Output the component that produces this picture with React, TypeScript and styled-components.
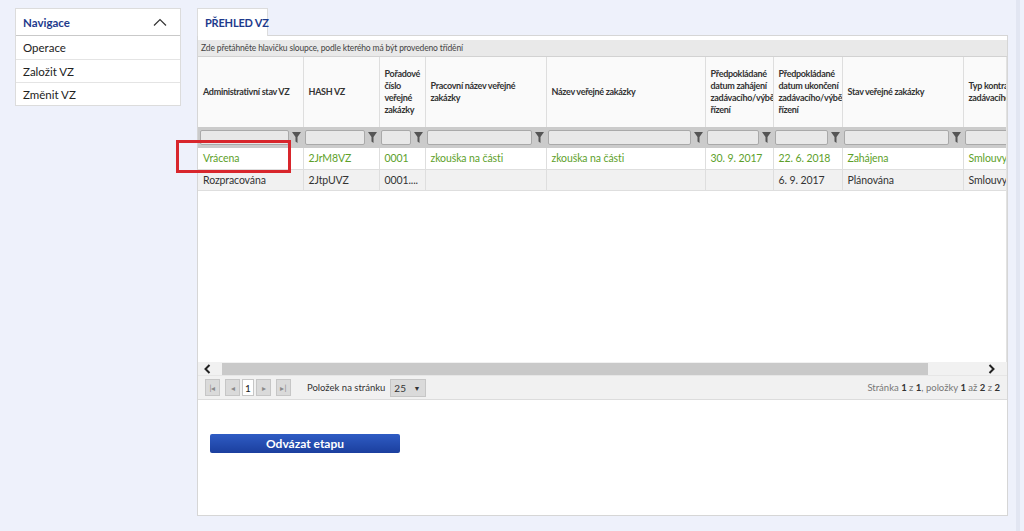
import React from "react";
import styled, { createGlobalStyle } from "styled-components";

const GlobalStyle = createGlobalStyle`
  html, body {
    margin: 0;
    padding: 0;
    background: #eef1fb;
    font-family: "Lato", "Liberation Sans", sans-serif;
    color: #333;
  }
  * { box-sizing: border-box; }
`;

const Page = styled.div`
  display: flex;
  align-items: flex-start;
  width: 1024px;
  height: 531px;
  padding: 8px 0 0 15px;
  overflow: hidden;
  position: relative;
`;

const EdgeStrip = styled.div`
  flex-shrink: 0;
  margin-left: 8px;
  width: 4px;
  height: 531px;
  margin-top: -8px;
  background: #e2e6f2;
`;

const Nav = styled.nav`
  flex-shrink: 0;
  width: 166px;
  margin-right: 16px;
  background: #fff;
  border: 1px solid #dcdcdc;
`;

const NavHead = styled.div`
  height: 27px;
  display: flex;
  align-items: center;
  justify-content: space-between;
  padding: 0 13px 0 7px;
  color: #1e3a8c;
  font-weight: bold;
  font-size: 11.5px;
  border-bottom: 1px solid #c9c9c9;
`;

const NavItem = styled.div`
  height: 23px;
  display: flex;
  align-items: center;
  padding-left: 7px;
  font-size: 11.5px;
  color: #222;
  & + & { border-top: 1px solid #e4e4e4; }
`;

const Main = styled.main`
  flex-shrink: 0;
  width: 811px;
  display: flex;
  flex-direction: column;
`;

const Tab = styled.div`
  align-self: flex-start;
  width: 71px;
  height: 28px;
  padding: 0 7px;
  display: flex;
  align-items: center;
  background: #fff;
  border: 1px solid #dcdcdc;
  border-bottom: none;
  color: #1e3a8c;
  font-weight: bold;
  font-size: 11px;
  letter-spacing: -0.2px;
  white-space: nowrap;
  position: relative;
  z-index: 1;
  margin-bottom: -1px;
`;

const Panel = styled.section`
  height: 481px;
  background: #fff;
  border: 1px solid #d6d6d6;
  padding-top: 4px;
  display: flex;
  flex-direction: column;
`;

const Grid = styled.div`
  border-bottom: 1px solid #dcdcdc;
  background: #fff;
`;

const GroupBar = styled.div`
  height: 17px;
  background: #e9e9e9;
  border-bottom: 1px solid #d2d2d2;
  font-size: 8.5px;
  letter-spacing: -0.15px;
  color: #444;
  padding-left: 3px;
  display: flex;
  align-items: center;
`;

const TableClip = styled.div`
  overflow: hidden;
  height: 305px;
  border-right: 1px solid #e2e2e2;
`;

const Table = styled.table`
  table-layout: fixed;
  border-collapse: collapse;
  width: 865px;
`;

const Th = styled.th`
  height: 70px;
  padding: 0 2px 0 5px;
  text-align: left;
  vertical-align: middle;
  font-size: 9px;
  line-height: 12px;
  letter-spacing: -0.3px;
  font-weight: bold;
  color: #333;
  background: #fafafa;
  overflow: hidden;
  border-left: 1px solid #dedede;
  &:first-child { border-left: none; }
`;

const FilterTd = styled.td`
  height: 21px;
  background: #cbcbcb;
  padding: 0 2px;
`;

const FilterBox = styled.div`
  display: flex;
  align-items: center;
  gap: 3px;
`;

const FilterInput = styled.div`
  flex: 1;
  height: 15px;
  background: #e8e8e8;
  border: 1px solid #a9a9a9;
  border-radius: 2px;
`;

const Td = styled.td<{ $alt?: boolean; $green?: boolean }>`
  height: 21px;
  padding: 0 5px;
  font-size: 10.5px;
  letter-spacing: -0.1px;
  white-space: nowrap;
  overflow: hidden;
  color: ${(p) => (p.$green ? "#5d9f2a" : "#333")};
  background: ${(p) => (p.$alt ? "#f1f1f1" : "#fff")};
  border-left: 1px solid #dedede;
  border-bottom: 1px solid #dedede;
  &:first-child { border-left: none; }
`;

const ScrollBar = styled.div`
  height: 13px;
  background: #f1f1f1;
  display: flex;
  align-items: center;
  justify-content: space-between;
  padding: 0 12px 0 6px;
`;

const Thumb = styled.div`
  width: 706px;
  height: 12px;
  margin-left: 11px;
  margin-right: auto;
  background: #c9c9c9;
`;

const Pager = styled.div`
  height: 24px;
  background: #f1f1f1;
  border-top: 1px solid #e6e6e6;
  display: flex;
  align-items: center;
  padding: 0 7px;
  font-size: 9.5px;
  color: #333;
`;

const PageBtn = styled.span<{ $gap?: number }>`
  width: 15px;
  height: 17px;
  background: #dadada;
  border: 1px solid #c6c6c6;
  display: inline-flex;
  align-items: center;
  justify-content: center;
  margin-right: ${(p) => p.$gap ?? 2}px;
  color: #8a8a8a;
  font-size: 8px;
`;

const PageNum = styled.span`
  width: 12px;
  height: 17px;
  background: #fff;
  border: 1px solid #c6c6c6;
  display: inline-flex;
  align-items: center;
  justify-content: center;
  margin-right: 2px;
  font-size: 10px;
  color: #222;
`;

const PerPage = styled.span`
  margin-left: 14px;
  margin-right: 5px;
`;

const Select = styled.span`
  width: 36px;
  height: 18px;
  background: #dadada;
  border: 1px solid #c6c6c6;
  display: inline-flex;
  align-items: center;
  justify-content: space-between;
  padding: 0 5px 0 3px;
  font-size: 10px;
`;

const Caret = styled.span`
  font-size: 7px;
`;

const PageInfo = styled.span`
  margin-left: auto;
  color: #777;
  font-size: 9.5px;
  b { color: #333; }
`;

const Actions = styled.div`
  padding: 32px 0 0 12px;
`;

const Button = styled.button`
  width: 190px;
  height: 19px;
  border: none;
  border-radius: 2px;
  background: linear-gradient(#2f5cc4, #1b3f9e);
  color: #fff;
  font-family: inherit;
  font-weight: bold;
  font-size: 12px;
  padding: 0;
`;

const Highlight = styled.div`
  position: absolute;
  left: 176px;
  top: 140px;
  width: 115px;
  height: 33px;
  border: 3px solid #d8262c;
  pointer-events: none;
`;

const Funnel = () => (
  <svg width="9" height="11" viewBox="0 0 9 11">
    <path d="M0 0h9L5.5 5v6L3.5 9.5V5z" fill="#555" />
  </svg>
);

const ChevronUp = () => (
  <svg width="14" height="8" viewBox="0 0 14 8">
    <path d="M1 7.5L7 1.5l6 6" stroke="#333" strokeWidth="1.2" fill="none" />
  </svg>
);

const Chevron = ({ dir }: { dir: "left" | "right" }) => (
  <svg width="7" height="10" viewBox="0 0 7 10">
    <path
      d={dir === "left" ? "M5.5 1L1.5 5l4 4" : "M1.5 1l4 4-4 4"}
      stroke="#222"
      strokeWidth="2"
      fill="none"
    />
  </svg>
);

const widths = [105, 76, 46, 121, 159, 68, 69, 121, 100];
const heads = [
  "Administrativní stav VZ",
  "HASH VZ",
  "Pořadové číslo veřejné zakázky",
  "Pracovní název veřejné zakázky",
  "Název veřejné zakázky",
  "Předpokládané datum zahájení zadávacího/výběrového řízení",
  "Předpokládané datum ukončení zadávacího/výběrového řízení",
  "Stav veřejné zakázky",
  "Typ kontraktu zadávacího řízení",
];

const rows = [
  { green: true, cells: ["Vrácena", "2JrM8VZ", "0001", "zkouška na části", "zkouška na části", "30. 9. 2017", "22. 6. 2018", "Zahájena", "Smlouvy na"] },
  { green: false, cells: ["Rozpracována", "2JtpUVZ", "0001....", "", "", "", "6. 9. 2017", "Plánována", "Smlouvy na"] },
];

export default function App() {
  return (
    <>
      <GlobalStyle />
      <Page>
        <Nav>
          <NavHead>
            Navigace
            <ChevronUp />
          </NavHead>
          <NavItem>Operace</NavItem>
          <NavItem>Založit VZ</NavItem>
          <NavItem>Změnit VZ</NavItem>
        </Nav>
        <Main>
          <Tab>PŘEHLED VZ</Tab>
          <Panel>
            <Grid>
              <GroupBar>Zde přetáhněte hlavičku sloupce, podle kterého má být provedeno třídění</GroupBar>
              <TableClip>
                <Table>
                  <colgroup>
                    {widths.map((w, i) => (
                      <col key={i} style={{ width: w }} />
                    ))}
                  </colgroup>
                  <thead>
                    <tr>
                      {heads.map((h) => (
                        <Th key={h}>{h}</Th>
                      ))}
                    </tr>
                    <tr>
                      {heads.map((h) => (
                        <FilterTd key={h}>
                          <FilterBox>
                            <FilterInput />
                            <Funnel />
                          </FilterBox>
                        </FilterTd>
                      ))}
                    </tr>
                  </thead>
                  <tbody>
                    {rows.map((r, i) => (
                      <tr key={i}>
                        {r.cells.map((c, j) => (
                          <Td key={j} $alt={i % 2 === 1} $green={r.green}>
                            {c}
                          </Td>
                        ))}
                      </tr>
                    ))}
                  </tbody>
                </Table>
              </TableClip>
              <ScrollBar>
                <Chevron dir="left" />
                <Thumb />
                <Chevron dir="right" />
              </ScrollBar>
              <Pager>
                <PageBtn $gap={5}>|◂</PageBtn>
                <PageBtn>◂</PageBtn>
                <PageNum>1</PageNum>
                <PageBtn $gap={5}>▸</PageBtn>
                <PageBtn>▸|</PageBtn>
                <PerPage>Položek na stránku</PerPage>
                <Select>
                  25 <Caret>▼</Caret>
                </Select>
                <PageInfo>
                  Stránka <b>1</b> z <b>1</b>, položky <b>1</b> až <b>2</b> z <b>2</b>
                </PageInfo>
              </Pager>
            </Grid>
            <Actions>
              <Button>Odvázat etapu</Button>
            </Actions>
          </Panel>
        </Main>
        <EdgeStrip />
        <Highlight />
      </Page>
    </>
  );
}
